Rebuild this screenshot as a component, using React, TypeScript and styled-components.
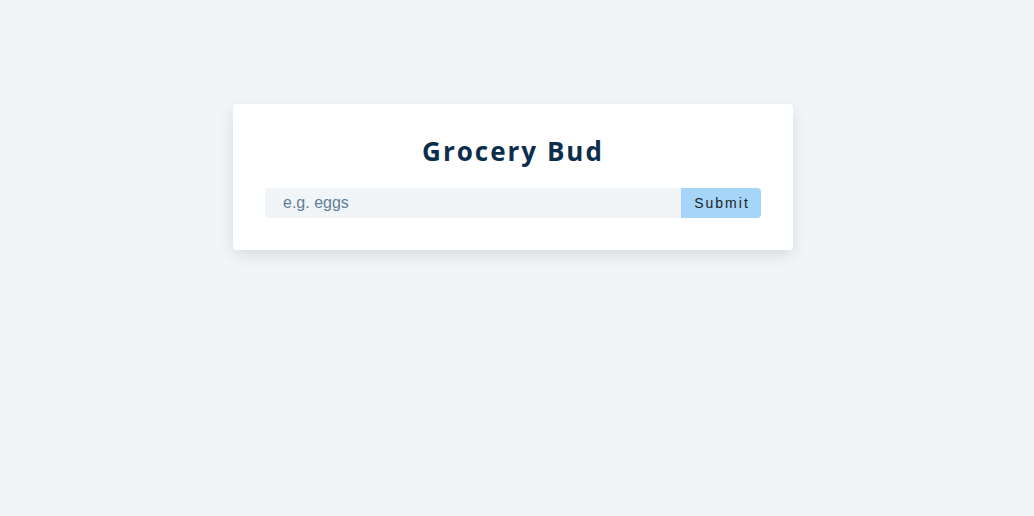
import React, { useState } from 'react';
import styled, { createGlobalStyle } from 'styled-components';

const GlobalStyle = createGlobalStyle`
  * {
    box-sizing: border-box;
  }
  body {
    margin: 0;
    background: #f1f5f8;
    font-family: "Liberation Sans", Arial, sans-serif;
  }
`;

const Page = styled.main`
  min-height: 100vh;
  padding: 104px 8px 0 0;
`;

const Card = styled.section`
  width: 560px;
  margin: 0 auto;
  background: #fff;
  border-radius: 4px;
  box-shadow: 0 5px 15px rgba(0, 0, 0, 0.1);
  padding: 32px 32px 32px;
`;

const Title = styled.h3`
  margin: 0 0 22px;
  text-align: center;
  color: #0c2e4d;
  font-family: "Open Sans", "Noto Sans", sans-serif;
  font-weight: 700;
  font-size: 26px;
  line-height: 30px;
  letter-spacing: 2px;
`;

const Form = styled.form`
  display: flex;
  height: 30px;
`;

const Input = styled.input`
  flex: 1;
  border: none;
  outline: none;
  background: #f1f5f8;
  border-top-left-radius: 4px;
  border-bottom-left-radius: 4px;
  padding: 0 18px;
  font-family: "Liberation Sans", Arial, sans-serif;
  font-size: 16px;
  color: #102a42;

  &::placeholder {
    color: #617d98;
  }
`;

const SubmitButton = styled.button`
  width: 80px;
  border: none;
  background: #a5d5f8;
  border-top-right-radius: 4px;
  border-bottom-right-radius: 4px;
  font-family: "Liberation Sans", Arial, sans-serif;
  font-size: 14px;
  letter-spacing: 2px;
  color: #222;
  cursor: pointer;
  padding: 0 0 0 2px;
`;

const App: React.FC = () => {
  const [name, setName] = useState('');

  return (
    <>
      <GlobalStyle />
      <Page>
        <Card>
          <Title>Grocery Bud</Title>
          <Form onSubmit={e => e.preventDefault()}>
            <Input
              type="text"
              placeholder="e.g. eggs"
              value={name}
              onChange={e => setName(e.target.value)}
            />
            <SubmitButton type="submit">Submit</SubmitButton>
          </Form>
        </Card>
      </Page>
    </>
  );
};

export default App;
